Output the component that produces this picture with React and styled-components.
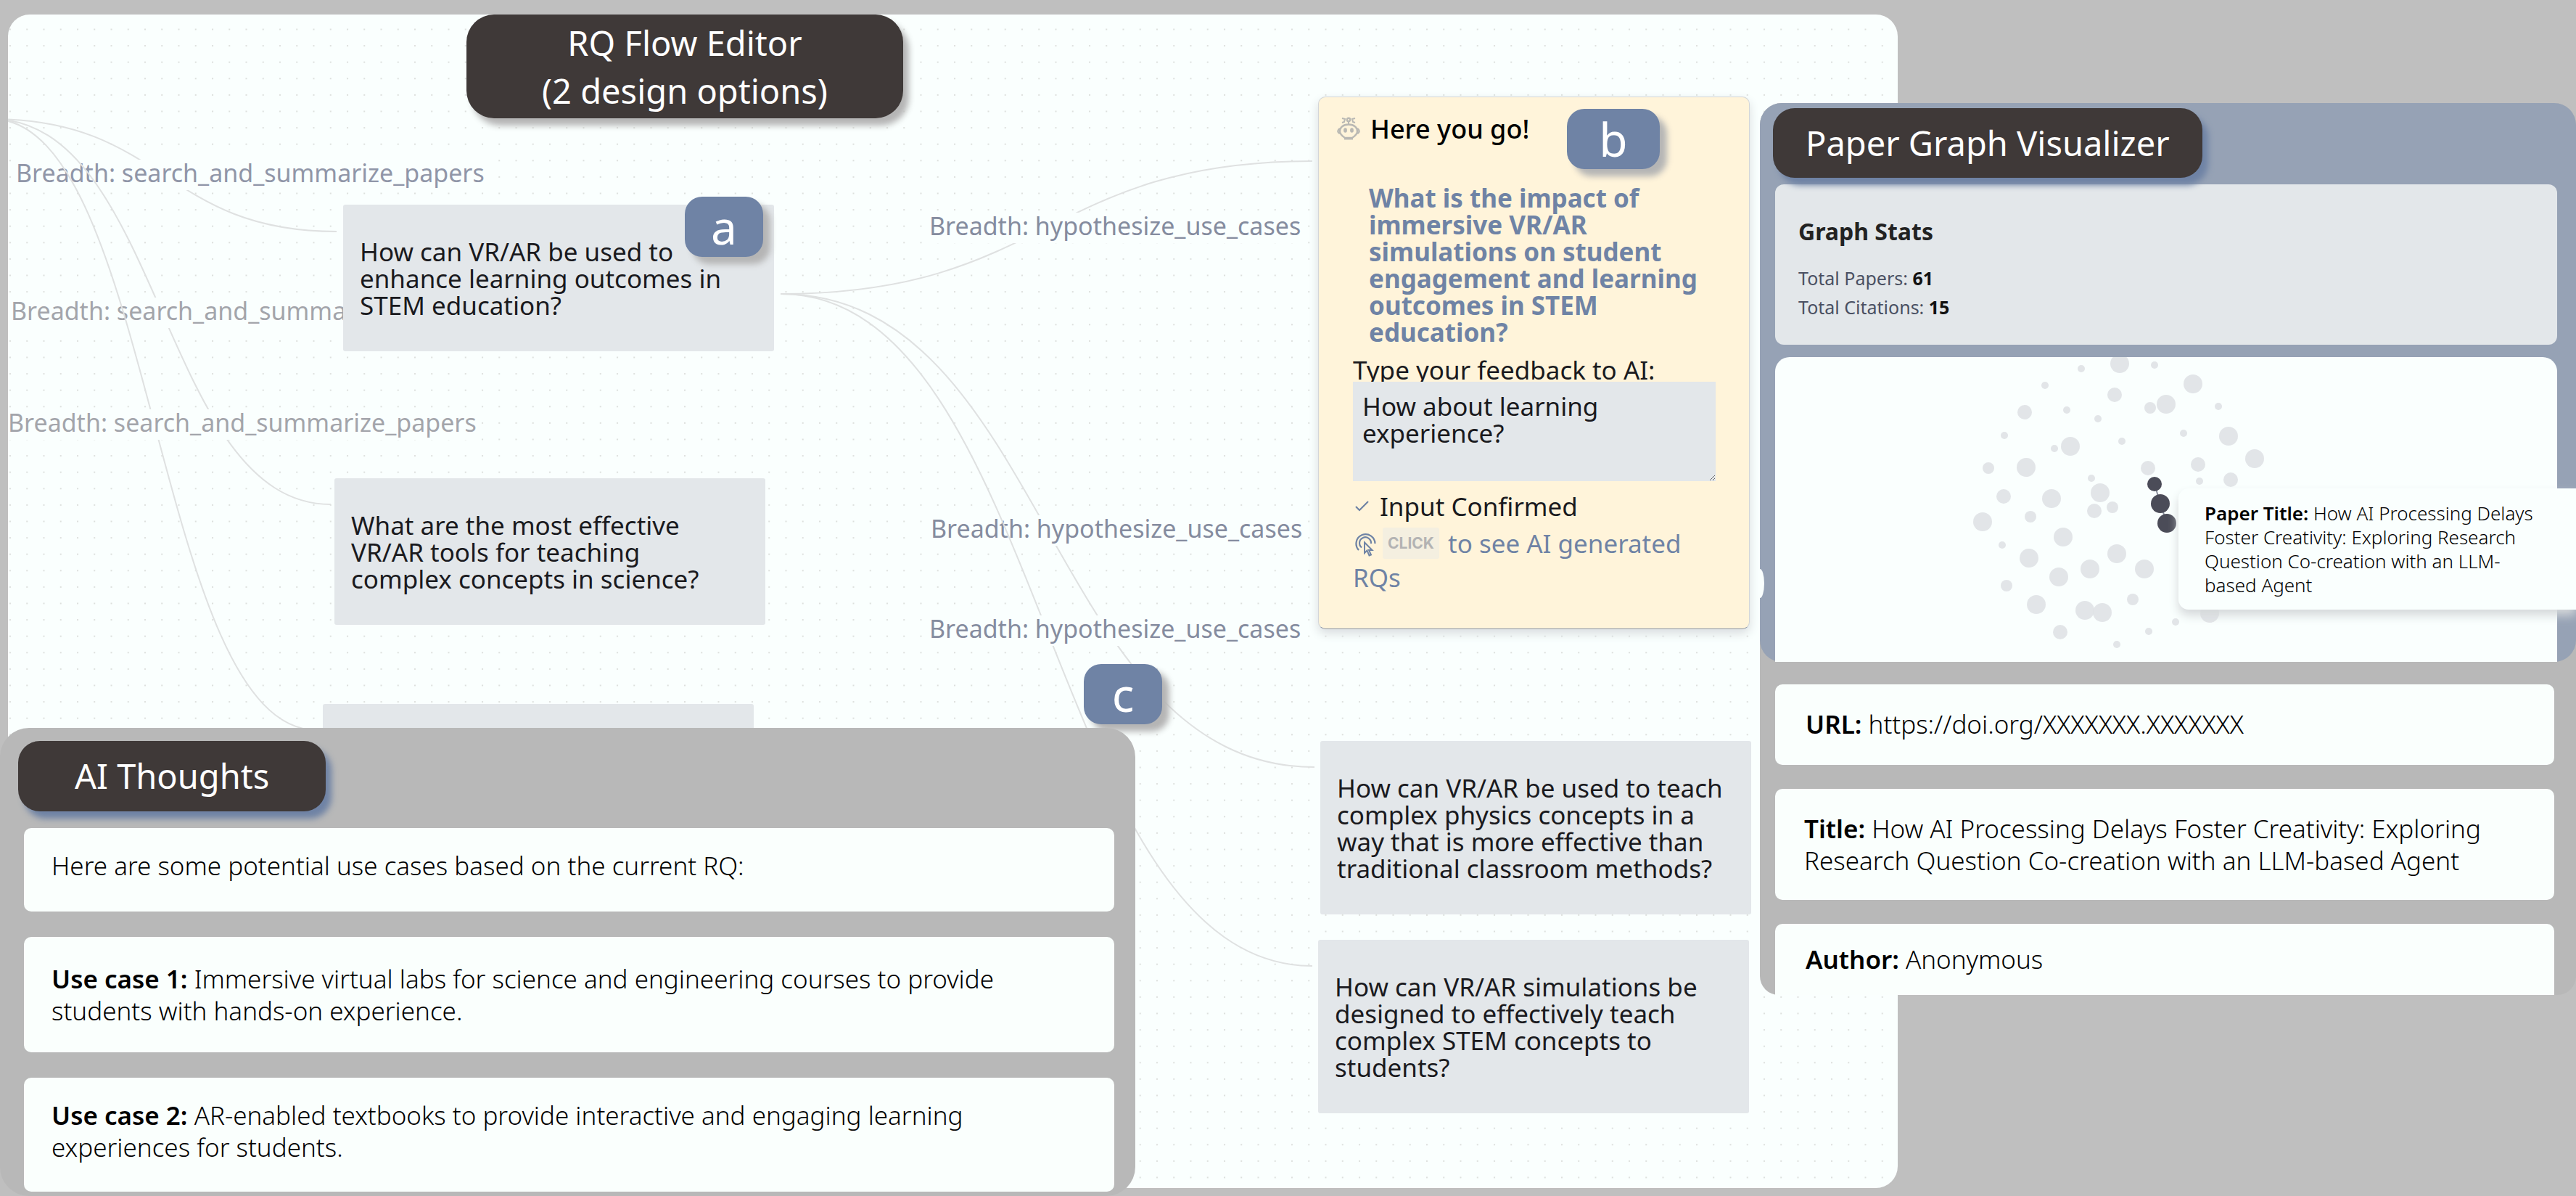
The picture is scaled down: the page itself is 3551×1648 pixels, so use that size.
import React from "react";
import styled, { createGlobalStyle, css } from "styled-components";

const color = {
  page: "#bfbfbf",
  canvas: "#fafffe",
  ink: "#3f3938",
  slate: "#6f83a5",
  slateSoft: "#96a2b5",
  ash: "#b8b8b8",
  node: "#e3e7ea",
  note: "#fff4da",
};

const GlobalStyle = createGlobalStyle`
  *, *::before, *::after { box-sizing: border-box; }
  body {
    margin: 0;
    background: ${color.page};
    font-family: "Noto Sans", "Open Sans", sans-serif;
    color: #1a1a1e;
  }
  p, h1, h2, h3 { margin: 0; font-weight: 400; }
`;

const Page = styled.div`
  display: grid;
  grid-template-columns: 1565fr 861fr 190fr 935fr;
  grid-template-rows: 142px auto 1fr;
  min-height: 100vh;
  overflow: hidden;
`;

/* ---------- Flow editor ---------- */

const Canvas = styled.main`
  grid-column: 1 / 4;
  grid-row: 1 / -1;
  position: relative;
  margin: 20px 0 11px 11px;
  border-radius: 30px;
  background: ${color.canvas};
  overflow: hidden;
`;

const Wires = styled.svg`
  position: absolute;
  inset: 0;
  width: 100%;
  height: 100%;

  path { fill: none; stroke: #dfe1e1; stroke-width: 2; }
  rect.plate { fill: ${color.canvas}; }
  text { font-size: 34px; }
`;

const Chip = styled.h2`
  display: flex;
  align-items: center;
  justify-content: center;
  width: max-content;
  padding: ${(p) => p.$pad};
  border-radius: 30px;
  background: ${color.ink};
  color: #fff;
  font-size: 47px;
  line-height: 66px;
  text-align: center;
  white-space: pre-line;
  box-shadow: 8px 10px 8px ${(p) => p.$shadow || color.slate};
`;

const CanvasTitle = styled(Chip)`
  position: absolute;
  top: 0;
  left: 632px;
  border-radius: 38px;
`;

const Placed = css`
  position: absolute;
  left: ${(p) => p.$x}px;
  top: ${(p) => p.$y}px;
`;

const Node = styled.article`
  ${Placed}
  width: 594px;
  min-height: 120px;
  padding: 46px 32px 45px 23px;
  border-radius: 3px;
  background: ${color.node};
  font-size: 35px;
  line-height: 37px;
`;

const Badge = styled.span`
  ${Placed}
  display: flex;
  align-items: center;
  justify-content: center;
  width: ${(p) => (p.$wide ? 128 : 108)}px;
  height: 83px;
  border-radius: 24px;
  background: ${color.slate};
  color: #fff;
  font-size: 64px;
  line-height: 83px;
  box-shadow: 10px 10px 8px #b5b5b5;
`;

const Note = styled.section`
  ${Placed}
  width: 595px;
  padding: 22px 46px 47px 47px;
  border: 1px solid #d3d6d9;
  border-bottom-color: #8f98a8;
  border-radius: 10px;
  background: ${color.note};
  font-size: 35px;
  line-height: 37px;
  box-shadow: 0 6px 14px #d9dddf;
`;

const NoteHeader = styled.header`
  display: flex;
  align-items: center;
  gap: 14px;
  margin-left: -22px;
  font-size: 36px;
  font-weight: 500;
  line-height: 44px;
  color: #000;
`;

const Question = styled.h3`
  margin: 54px 0 15px 22px;
  color: ${color.slate};
  font-size: 35px;
  font-weight: 700;
`;

const FeedbackLabel = styled.label`
  display: block;
`;

const Feedback = styled.textarea`
  display: block;
  position: relative;
  width: 100%;
  height: 137px;
  margin: -2px 0 11px;
  padding: 15px 13px;
  border: 0;
  border-radius: 0;
  outline: 0;
  background: ${color.node};
  color: inherit;
  font: inherit;
  overflow: hidden;
`;

const Confirmed = styled.p`
  display: flex;
  align-items: center;
  gap: 15px;
  padding-left: 3px;
  margin-bottom: 4px;
  line-height: 47px;
`;

const Generate = styled.p`
  color: ${color.slate};
  line-height: 47px;

  svg { vertical-align: middle; margin: 0 9px 4px 3px; }
`;

const ClickButton = styled.button`
  height: 43px;
  width: 78px;
  margin: -6px 12px 2px 0;
  padding: 0;
  border: 0;
  border-radius: 3px;
  background: #f4efe0;
  color: #b3b3b3;
  font: 700 21px/43px Inter, sans-serif;
  text-align: center;
  vertical-align: middle;
`;

/* ---------- Side panels ---------- */

const Thoughts = styled.aside`
  grid-column: 1;
  grid-row: 1 / -1;
  align-self: end;
  position: relative;
  display: flex;
  flex-direction: column;
  gap: 35px;
  padding: 138px 29px 6px 33px;
  border-radius: 40px;
  background: ${color.ash};
`;

const ThoughtsTitle = styled(Chip)`
  position: absolute;
  top: 18px;
  left: 25px;
`;

const Card = styled.div`
  padding: ${(p) => p.$pad};
  border-radius: ${(p) => (p.$cut ? "10px 10px 0 0" : "10px")};
  background: #fafffd;
  font-size: 35px;
  font-weight: 300;
  line-height: 44px;
  color: #000;

  a { color: inherit; text-decoration: none; }
  b { font-weight: 600; }
`;

const Visualizer = styled.aside`
  grid-column: 3 / 5;
  grid-row: 2;
  position: relative;
  border-radius: 30px 30px 26px 26px;
  background: ${color.ash};
`;

const GraphArea = styled.section`
  display: flex;
  flex-direction: column;
  gap: 17px;
  padding: 7px 26px 0 21px;
  border-radius: 30px;
  background: ${color.slateSoft};
`;

const VisualizerTitle = styled(Chip)`
  position: relative;
  margin: 0 0 -8px -3px;
`;

const Stats = styled.div`
  padding: 40px 32px 32px;
  border-radius: 12px;
  background: ${color.node};
  color: #4a5062;
  font-size: 25px;
  font-weight: 500;
  line-height: 40px;

  h3 { margin-bottom: 20px; color: #222; font-size: 32px; font-weight: 700; line-height: 49px; }
  b { color: #111; }
`;

const Graph = styled.svg`
  display: block;
  width: 100%;
  height: 420px;
  border-radius: 20px 20px 0 0;
  background: ${color.canvas};
`;

const Details = styled.section`
  display: flex;
  flex-direction: column;
  gap: 33px;
  padding: 31px 30px 0 21px;
`;

const Tooltip = styled.div`
  position: absolute;
  top: 531px;
  right: 0;
  width: 548px;
  padding: 18px 40px 17px 36px;
  border-radius: 14px 0 0 14px;
  background: ${color.canvas};
  font-size: 26px;
  font-weight: 300;
  line-height: 33px;
  color: #000;
  box-shadow: 0 8px 14px #d5d8da;

  b { font-weight: 600; }
`;

const Knob = styled.span`
  position: absolute;
  top: 642px;
  left: 0;
  width: 6px;
  height: 40px;
  border-radius: 0 6px 6px 0 / 0 20px 20px 0;
  background: ${color.canvas};
`;

/* ---------- Data ---------- */

const wires = [
  { d: "M-11 164 C226 164 226 319 464 319", label: "Breadth: search_and_summarize_papers", x: 22, y: 251, fill: "#9096a8" },
  { d: "M-11 164 C223 164 223 695 456 695", label: "Breadth: search_and_summarize_papers", x: 15, y: 441, fill: "#a3a5ab" },
  { d: "M-11 164 C213 164 213 1006 437 1006", label: "Breadth: search_and_summarize_papers", x: 11, y: 595, fill: "#a3a5ab" },
  { d: "M1076 405 C1443 405 1443 222 1809 222", label: "Breadth: hypothesize_use_cases", x: 1281, y: 324, fill: "#858c9f" },
  { d: "M1076 405 C1444 405 1444 1057 1812 1057", label: "Breadth: hypothesize_use_cases", x: 1283, y: 741, fill: "#858c9f" },
  { d: "M1076 405 C1443 405 1443 1331 1809 1331", label: "Breadth: hypothesize_use_cases", x: 1281, y: 879, fill: "#858c9f" },
];

const nodes = [
  { x: 462, y: 262, text: "How can VR/AR be used to enhance learning outcomes in STEM education?" },
  { x: 450, y: 639, text: "What are the most effective VR/AR tools for teaching complex concepts in science?" },
  { x: 434, y: 950, text: "" },
  { x: 1809, y: 1001, text: "How can VR/AR be used to teach complex physics concepts in a way that is more effective than traditional classroom methods?" },
  { x: 1806, y: 1275, text: "How can VR/AR simulations be designed to effectively teach complex STEM concepts to students?" },
];

const papers = [
  [487, 9, 13], [535, 11, 5], [434, 16, 5], [588, 37, 13], [384, 39, 5], [480, 52, 10],
  [551, 65, 13], [529, 70, 8], [623, 68, 5], [356, 76, 10], [414, 73, 5], [457, 85, 5],
  [328, 108, 5], [575, 105, 5], [637, 109, 13], [419, 123, 13], [397, 126, 5], [490, 116, 5],
  [673, 140, 13], [306, 153, 8], [358, 152, 13], [526, 153, 10], [595, 148, 10], [448, 167, 5],
  [597, 171, 5], [640, 169, 10], [460, 187, 13], [327, 192, 10], [393, 195, 13], [452, 212, 10],
  [477, 207, 8], [364, 220, 8], [298, 227, 13], [409, 248, 13], [325, 259, 5], [483, 271, 13],
  [362, 277, 13], [446, 292, 13], [521, 292, 13], [403, 303, 13], [331, 315, 8], [505, 334, 8],
  [372, 341, 13], [439, 349, 13], [463, 352, 13], [405, 379, 10], [564, 365, 5], [527, 378, 5],
  [483, 396, 5], [611, 353, 13],
];

const selected = [[535, 175, 10], [543, 202, 13], [552, 229, 13]];

/* ---------- Icons ---------- */

const RobotIcon = () => (
  <svg width="32" height="34" viewBox="0 0 32 34" fill="none" stroke="#b9b8b3" strokeWidth="2.4" aria-hidden="true">
    <path d="M7 2l4 1-1 4-3 1M25 2l-4 1 1 4 3 1M16 5v5" strokeWidth="2" />
    <circle cx="16" cy="4" r="2.200" />
    <path d="M16 10.500C8 10.500 4 15 4 20c0 4 4 7 7 9h10c3-2 7-5 7-9 0-5-4-9.500-12-9.500z" />
    <path d="M4 16c-3 2-4 5 0 7M28 16c3 2 4 5 0 7" />
    <path d="M10 30h12" strokeWidth="3" />
    <ellipse cx="11.500" cy="18.500" rx="2.400" ry="3.200" fill="#b9b8b3" stroke="none" />
    <ellipse cx="20.500" cy="18.500" rx="2.400" ry="3.200" fill="#b9b8b3" stroke="none" />
  </svg>
);

const CheckIcon = () => (
  <svg width="19" height="15" viewBox="0 0 19 15" fill="none" stroke={color.slate} strokeWidth="2.200" aria-hidden="true">
    <path d="M1 8l5 5L18 1" />
  </svg>
);

const TapIcon = () => (
  <svg width="29" height="34" viewBox="0 0 29 34" fill="none" stroke={color.slate} strokeWidth="2.200" aria-hidden="true">
    <path d="M5 24A13 13 0 1 1 27.500 15" />
    <path d="M9 20.500A8 8 0 1 1 22 15" />
    <path d="M13 13.500v14.500l3.500-3.500 3 7 2.500-1-3-6.500h4.500z" strokeWidth="2" />
  </svg>
);

export default function App() {
  return (
    <Page>
      <GlobalStyle />

      <Canvas>
        <Wires>
          <defs>
            <pattern id="dots" x="2" y="19.500" width="23.250" height="22.600" patternUnits="userSpaceOnUse">
              <rect width="2" height="2" fill="#dde0dd" />
            </pattern>
          </defs>
          <rect width="100%" height="100%" fill="url(#dots)" />
          <g transform="translate(-11 -20)">
            {wires.map((w) => (
              <g key={w.d}>
                <path d={w.d} />
                <rect className="plate" x={w.x - 4} y={w.y - 31} width={w.label.length > 32 ? 654 : 524} height="42" />
                <text x={w.x} y={w.y} fill={w.fill}>{w.label}</text>
              </g>
            ))}
          </g>
        </Wires>

        {nodes.map((n) => (
          <Node key={n.y} $x={n.x} $y={n.y}>{n.text}</Node>
        ))}

        <Note $x={1806} $y={113}>
          <NoteHeader><RobotIcon />Here you go!</NoteHeader>
          <Question>
            What is the impact of immersive VR/AR simulations on student engagement and learning
            outcomes in STEM education?
          </Question>
          <FeedbackLabel htmlFor="feedback">Type your feedback to AI:</FeedbackLabel>
          <Feedback id="feedback" defaultValue="How about learning experience?" />
          <Confirmed><CheckIcon />Input Confirmed</Confirmed>
          <Generate>
            <TapIcon />
            <ClickButton type="button">CLICK</ClickButton>
            to see AI generated RQs
          </Generate>
        </Note>

        <Badge $x={933} $y={251}>a</Badge>
        <Badge $x={2149} $y={130} $wide>b</Badge>
        <Badge $x={1483} $y={895}>c</Badge>

        <CanvasTitle $pad="6px 104px 5px" $shadow="#b5b5b5">{"RQ Flow Editor\n(2 design options)"}</CanvasTitle>
      </Canvas>

      <Thoughts>
        <ThoughtsTitle $pad="15px 78px 16px">AI Thoughts</ThoughtsTitle>
        <Card $pad="30px 38px 41px">Here are some potential use cases based on the current RQ:</Card>
        <Card $pad="36px 140px 35px 38px">
          <b>Use case 1:</b> Immersive virtual labs for science and engineering courses to provide
          students with hands-on experience.
        </Card>
        <Card $pad="30px 140px 39px 38px">
          <b>Use case 2:</b> AR-enabled textbooks to provide interactive and engaging learning
          experiences for students.
        </Card>
      </Thoughts>

      <Visualizer>
        <GraphArea>
          <VisualizerTitle $pad="15px 45px">Paper Graph Visualizer</VisualizerTitle>
          <Stats>
            <h3>Graph Stats</h3>
            <p>Total Papers: <b>61</b></p>
            <p>Total Citations: <b>15</b></p>
          </Stats>
          <Graph viewBox="12 0 1078 420" preserveAspectRatio="xMinYMin slice">
            <g fill="#dfe2e5" fillOpacity="0.9">
              {papers.map(([x, y, r]) => <circle key={`${x}-${y}`} cx={x} cy={y} r={r} />)}
            </g>
            <path d="M535 175L543 202L552 229" stroke="#8a8f9c" strokeWidth="2" fill="none" />
            <g fill="#4b4c58">
              {selected.map(([x, y, r]) => <circle key={`${x}-${y}`} cx={x} cy={y} r={r} />)}
            </g>
          </Graph>
        </GraphArea>
        <Details>
          <Card $pad="33px 42px 34px"><b>URL:</b> <a href="#doi">https://doi.org/XXXXXXX.XXXXXXX</a></Card>
          <Card $pad="33px 42px 32px 40px">
            <b>Title:</b> How AI Processing Delays Foster Creativity: Exploring Research Question
            Co-creation with an LLM-based Agent
          </Card>
          <Card $pad="27px 42px" $cut><b>Author:</b> Anonymous</Card>
        </Details>
        <Knob />
        <Tooltip role="tooltip">
          <b>Paper Title:</b> How AI Processing Delays Foster Creativity: Exploring Research
          Question Co-creation with an LLM-based Agent
        </Tooltip>
      </Visualizer>
    </Page>
  );
}
